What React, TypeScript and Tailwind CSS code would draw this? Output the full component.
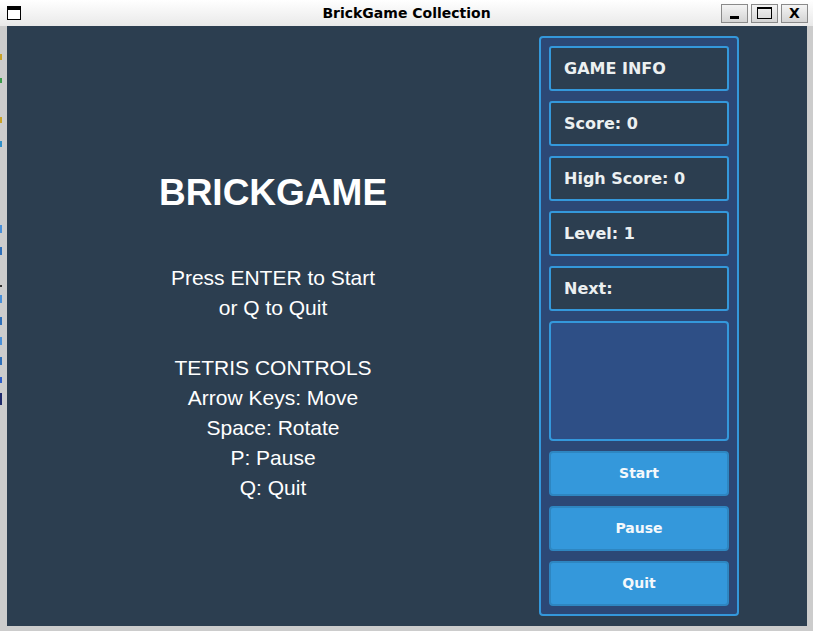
import React from 'react';

const infoRows = ['GAME INFO', 'Score: 0', 'High Score: 0', 'Level: 1', 'Next:'];
const buttons = ['Start', 'Pause', 'Quit'];

// bits of the desktop peeking out on the left edge
const edgeMarks: { y: number; h: number; c: string }[] = [
  { y: 28, h: 6, c: 'bg-[#c9a227]' },
  { y: 18, h: 5, c: 'bg-[#3a9a4a]' },
  { y: 34, h: 6, c: 'bg-[#c9a227]' },
  { y: 18, h: 6, c: 'bg-[#2e8fc9]' },
  { y: 78, h: 8, c: 'bg-[#4a90d9]' },
  { y: 14, h: 8, c: 'bg-[#2e6fb9]' },
  { y: 30, h: 2, c: 'bg-[#333333]' },
  { y: 8, h: 8, c: 'bg-[#4a90d9]' },
  { y: 14, h: 8, c: 'bg-[#2e6fb9]' },
  { y: 12, h: 8, c: 'bg-[#4a90d9]' },
  { y: 12, h: 8, c: 'bg-[#2e6fb9]' },
  { y: 12, h: 6, c: 'bg-[#2e5fc9]' },
  { y: 10, h: 12, c: 'bg-[#1f2a6a]' },
];

function TitleButton({ children }: { children: React.ReactNode }) {
  return (
    <div className="w-[27px] h-[19px] border border-[#8a8a8a] bg-gradient-to-b from-[#f4f4f4] to-[#d4d4d4] flex items-center justify-center">
      {children}
    </div>
  );
}

export default function App() {
  return (
    <div className="w-[813px] h-[631px] bg-[#cccccc] flex flex-col overflow-hidden">
      {/* window title bar */}
      <div className="h-[26px] grid grid-cols-[1fr_auto_1fr] items-center bg-gradient-to-b from-[#ffffff] to-[#e9e9e9]">
        <div className="ml-[7px] w-[14px] h-[14px] border border-black border-t-[4px] bg-white" />
        <div className="text-center text-[14px] font-bold text-black font-['DejaVu_Sans',sans-serif]">
          BrickGame Collection
        </div>
        <div className="flex gap-[3px] mr-[5px] justify-self-end">
          <TitleButton>
            <div className="w-[9px] h-[3px] bg-black mt-[9px]" />
          </TitleButton>
          <TitleButton>
            <div className="w-[15px] h-[12px] border border-black border-t-2" />
          </TitleButton>
          <TitleButton>
            <span className="text-[14px] font-bold leading-none font-['DejaVu_Sans',sans-serif]">X</span>
          </TitleButton>
        </div>
      </div>

      <div className="flex flex-1">
        <div className="w-[7px] flex flex-col">
          {edgeMarks.map((m, i) => (
            <div
              key={i}
              className={`w-[2px] ${m.c}`}
              style={{ marginTop: m.y, height: m.h }}
            />
          ))}
        </div>

        <div className="w-[800px] h-[600px] bg-[#2c3e50] flex">
          {/* start screen */}
          <div className="w-[532px] flex flex-col items-center pt-[146px] text-white font-['Liberation_Sans',Arial,sans-serif]">
            <div className="text-[37px] leading-[42px] font-bold">BRICKGAME</div>
            <div className="mt-[49px] text-[21px] leading-[30px] text-center">
              <div>Press ENTER to Start</div>
              <div>or Q to Quit</div>
              <div className="h-[30px]" />
              <div>TETRIS CONTROLS</div>
              <div>Arrow Keys: Move</div>
              <div>Space: Rotate</div>
              <div>P: Pause</div>
              <div>Q: Quit</div>
            </div>
          </div>

          {/* side panel */}
          <div className="mt-[10px] self-start w-[200px] border-2 border-[#3498db] rounded-[4px] bg-[#2c4876] p-[8px] flex flex-col gap-[10px] font-['DejaVu_Sans',sans-serif]">
            {infoRows.map((t) => (
              <div
                key={t}
                className="h-[45px] border-2 border-[#3498db] rounded-[3px] bg-[#2c3e50] flex items-center pl-[13px] text-[16px] font-bold text-[#ecf0f1]"
              >
                {t}
              </div>
            ))}
            <div className="h-[120px] border-2 border-[#3498db] rounded-[4px] bg-[#2e4f86]" />
            {buttons.map((b) => (
              <div
                key={b}
                className="h-[45px] border-2 border-[#2e86c1] rounded-[4px] bg-[#3498db] flex items-center justify-center text-[14px] font-bold text-[#f4f8fb]"
              >
                {b}
              </div>
            ))}
          </div>
        </div>
      </div>
      <div className="h-[5px]" />
    </div>
  );
}
